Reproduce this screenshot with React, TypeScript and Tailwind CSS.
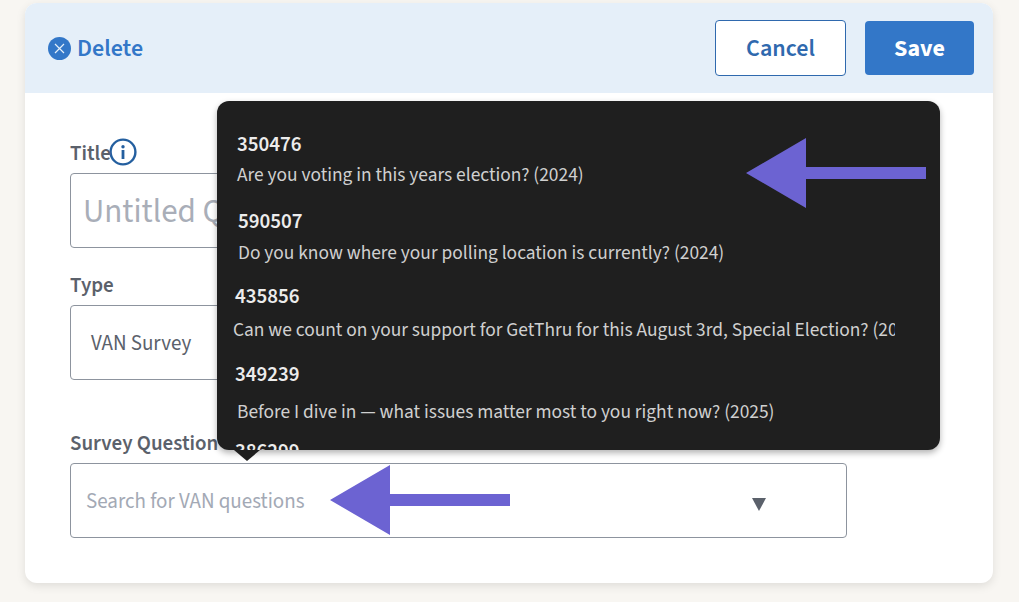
import React from 'react';

const FORM_FONT = "font-['Source_Sans_3','Lato','Noto_Sans',sans-serif]";

const questions = [
  { id: '350476', text: 'Are you voting in this years election? (2024)', idClass: 'ml-5 mt-[30px]', textClass: 'ml-5 mt-[7px]' },
  { id: '590507', text: 'Do you know where your polling location is currently? (2024)', idClass: 'ml-[21px] mt-[22px]', textClass: 'ml-[21px] mt-[8px]' },
  { id: '435856', text: 'Can we count on your support for GetThru for this August 3rd, Special Election? (2024)', idClass: 'ml-[18px] mt-[19px]', textClass: 'ml-4 mt-[10px]' },
  { id: '349239', text: 'Before I dive in — what issues matter most to you right now? (2025)', idClass: 'ml-[18px] mt-[20px]', textClass: 'ml-5 mt-[14px]' },
  { id: '386299', text: '', idClass: 'ml-[18px] mt-[15px]', textClass: '' },
];

const Arrow = ({ className }: { className: string }) => (
  <svg className={className} width="180" height="70" viewBox="0 0 180 70">
    <path d="M0 35 L60 0 V29 H180 V41 H60 V70 Z" fill="#6c63d2" />
  </svg>
);

function Field({ label, children }: { label: React.ReactNode; children: React.ReactNode }) {
  return (
    <div>
      <div className="flex h-[26px] items-center text-[21px] font-semibold leading-none text-[#5b616b]">{label}</div>
      {children}
    </div>
  );
}

export default function App() {
  return (
    <div className={`h-[602px] w-[1019px] overflow-hidden bg-[#f8f6f2] pl-[25px] pt-[3px] ${FORM_FONT}`}>
      <div className="relative h-[580px] w-[968px] rounded-xl bg-white shadow-[0_3px_10px_rgba(0,0,0,0.1)]">
        <div className="flex h-[90px] items-center justify-between rounded-t-xl bg-[#e5eff9] pl-[23px] pr-[19px]">
          <div className="flex items-center gap-[7px] text-[24px] font-semibold text-[#3377c8]">
            <span className="flex h-[23px] w-[23px] items-center justify-center rounded-full bg-[#3377c8]">
              <svg width="11" height="11" viewBox="0 0 11 11">
                <path d="M1 1 L10 10 M10 1 L1 10" stroke="#e5eff9" strokeWidth="1.2" />
              </svg>
            </span>
            <span className="-ml-px translate-y-px">Delete</span>
          </div>
          <div className="flex items-center gap-[19px]">
            <button className="h-[56px] w-[131px] rounded border border-[#2f69ae] bg-white pt-0.5 text-[24px] font-semibold text-[#2f69ae]">Cancel</button>
            <button className="h-[54px] w-[109px] rounded bg-[#3377c8] pt-0.5 text-[24px] font-bold text-white">Save</button>
          </div>
        </div>

        <div className="flex flex-col pl-[45px] pt-[46px]">
          <Field
            label={
              <>
                <span className="translate-y-px">Title</span>
                <svg width="28" height="28" viewBox="0 0 28 28" className="-ml-[2px]">
                  <circle cx="14" cy="14" r="12.4" fill="none" stroke="#245f9f" strokeWidth="2.4" />
                  <circle cx="14" cy="8.8" r="1.7" fill="#245f9f" />
                  <rect x="12.6" y="12" width="2.8" height="9" fill="#245f9f" />
                </svg>
              </>
            }
          >
            <div className="mt-[8px] flex h-[75px] w-[777px] items-center rounded border border-[#8d949e] pl-3 text-[33px] text-[#a9aeb8]">
              <span className="translate-y-px">Untitled Question</span>
            </div>
          </Field>
          <div className="mt-[24px]">
            <Field label="Type">
              <div className="mt-[7px] flex h-[75px] w-[777px] items-center rounded border border-[#8d949e] pl-5 text-[21px] text-[#5b616b]">
                <span className="translate-y-px">VAN Survey</span>
              </div>
            </Field>
          </div>
          <div className="mt-[50px]">
            <Field label="Survey Question">
              <div className="mt-[7px] flex h-[75px] w-[777px] items-center justify-between rounded border border-[#8d949e] pl-[15px] pr-[80px] text-[21px] text-[#a3a9b5]">
                <span className="translate-y-px">Search for VAN questions</span>
                <span className="h-0 w-0 translate-y-[4px] border-x-[7px] border-t-[13px] border-x-transparent border-t-[#5b616b]" />
              </div>
            </Field>
          </div>
        </div>

        <div className="absolute left-[192px] top-[98px] h-[349px] w-[723px] overflow-hidden rounded-xl bg-[#1f1f1f] shadow-[0_3px_6px_rgba(0,0,0,0.3)]">
          <div className="w-[678px] overflow-hidden">
            {questions.map((q) => (
              <div key={q.id}>
                <div className={`${q.idClass} text-[21px] font-semibold leading-[26px] text-[#ececec]`}>{q.id}</div>
                {q.text && <div className={`${q.textClass} whitespace-nowrap text-[19.4px] leading-[22px] text-[#d0d0d0]`}>{q.text}</div>}
              </div>
            ))}
          </div>
        </div>
        <span className="absolute left-[209px] top-[447px] h-0 w-0 border-x-[13px] border-t-[11px] border-x-transparent border-t-[#1f1f1f]" />

        <Arrow className="absolute left-[721px] top-[135px]" />
        <Arrow className="absolute left-[305px] top-[462px]" />
      </div>
    </div>
  );
}
